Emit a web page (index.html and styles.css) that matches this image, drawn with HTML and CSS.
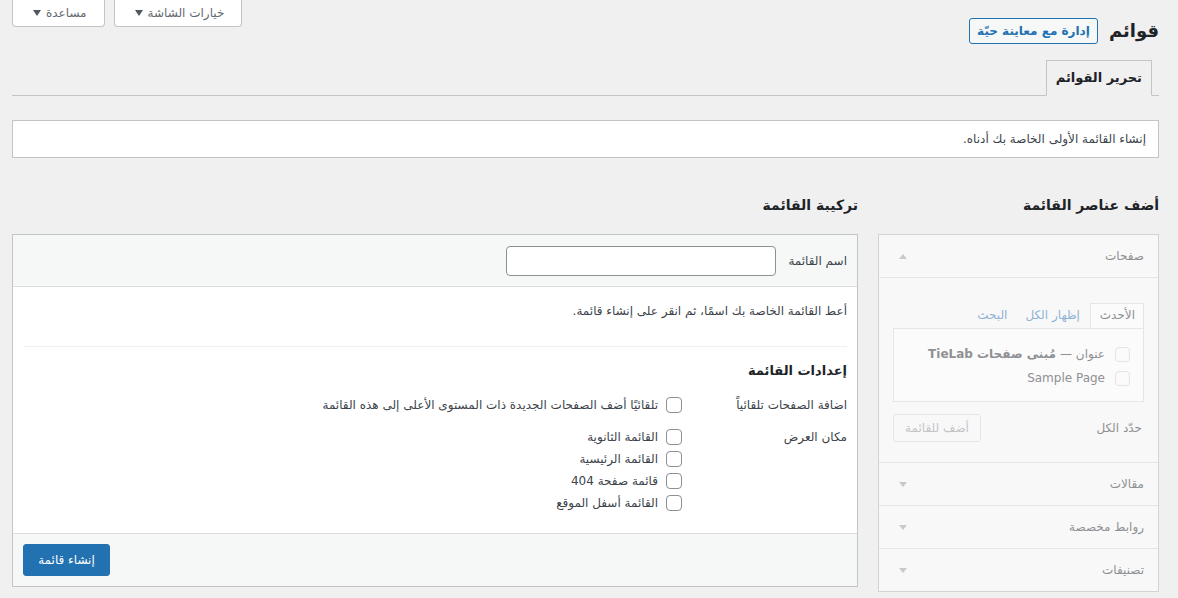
FILE: index.html
```html
<!DOCTYPE html>
<html lang="ar" dir="rtl">
<head>
  <meta charset="UTF-8">
  <meta name="viewport" content="width=device-width, initial-scale=1.0">
  <title>قوائم</title>
  <link rel="stylesheet" href="styles.css">
</head>
<body>
  <div class="wrap">
    <div class="page-head">
      <div class="title-group">
        <h1 class="page-title">قوائم</h1>
        <a class="title-action" href="#">إدارة مع معاينة حيّة</a>
      </div>
      <div class="meta-links">
        <button class="meta-btn">خيارات الشاشة <span class="caret"></span></button>
        <button class="meta-btn">مساعدة <span class="caret"></span></button>
      </div>
    </div>

    <div class="nav-tabs">
      <a class="nav-tab active" href="#">تحرير القوائم</a>
    </div>

    <div class="notice">إنشاء القائمة الأولى الخاصة بك أدناه.</div>

    <div class="columns">
      <!-- add menu items -->
      <div class="settings-col">
        <h2 class="col-title">أضف عناصر القائمة</h2>
        <div class="accordion">
          <div class="acc-section">
            <div class="acc-title open">صفحات <span class="acc-arrow up"></span></div>
            <div class="acc-content">
              <ul class="item-tabs">
                <li class="item-tab active">الأحدث</li>
                <li class="item-tab">إظهار الكل</li>
                <li class="item-tab">البحث</li>
              </ul>
              <div class="tabs-panel">
                <label class="item-row"><input type="checkbox" class="cb small" disabled> عنوان — <b>مُبنى صفحات TieLab</b></label>
                <label class="item-row"><input type="checkbox" class="cb small" disabled> Sample Page</label>
              </div>
              <div class="acc-actions">
                <span class="select-all">حدّد الكل</span>
                <button class="btn-secondary" disabled>أضف للقائمة</button>
              </div>
            </div>
          </div>
          <div class="acc-section">
            <div class="acc-title">مقالات <span class="acc-arrow"></span></div>
          </div>
          <div class="acc-section">
            <div class="acc-title">روابط مخصصة <span class="acc-arrow"></span></div>
          </div>
          <div class="acc-section">
            <div class="acc-title">تصنيفات <span class="acc-arrow"></span></div>
          </div>
        </div>
      </div>

      <!-- menu structure -->
      <div class="main-col">
        <h2 class="col-title">تركيبة القائمة</h2>
        <div class="menu-box">
          <div class="menu-header">
            <label class="name-label" for="menuName">اسم القائمة</label>
            <input class="name-input" id="menuName" type="text">
          </div>
          <div class="menu-body">
            <p class="hint">أعط القائمة الخاصة بك اسمًا، ثم انقر على إنشاء قائمة.</p>
            <div class="menu-settings">
              <h3 class="settings-title">إعدادات القائمة</h3>
              <div class="settings-row first">
                <div class="group-name">اضافة الصفحات تلقائياً</div>
                <div class="group-input">
                  <label class="opt"><input type="checkbox" class="cb"> تلقائيًا أضف الصفحات الجديدة ذات المستوى الأعلى إلى هذه القائمة</label>
                </div>
              </div>
              <div class="settings-row">
                <div class="group-name">مكان العرض</div>
                <div class="group-input">
                  <label class="opt"><input type="checkbox" class="cb"> القائمة الثانوية</label>
                  <label class="opt"><input type="checkbox" class="cb"> القائمة الرئيسية</label>
                  <label class="opt"><input type="checkbox" class="cb"> قائمة صفحة 404</label>
                  <label class="opt"><input type="checkbox" class="cb"> القائمة أسفل الموقع</label>
                </div>
              </div>
            </div>
          </div>
          <div class="menu-footer">
            <button class="btn-primary">إنشاء قائمة</button>
          </div>
        </div>
      </div>
    </div>
  </div>
</body>
</html>
```

FILE: styles.css
```css
:root {
  --page-bg: #f0f0f1;
  --border: #c3c4c7;
  --border-light: #dcdcde;
  --text: #3c434a;
  --heading: #1d2327;
  --muted: #646970;
  --blue: #2271b1;
}

* {
  box-sizing: border-box;
}

html,
body {
  margin: 0;
  padding: 0;
  background: var(--page-bg);
}

body {
  font-family: "DejaVu Sans", sans-serif;
  font-size: 12px;
  line-height: 1.4;
  color: var(--text);
}

.wrap {
  padding: 0 19px 0 12px;
}

/* Header */
.page-head {
  display: flex;
  align-items: flex-start;
}

.title-group {
  display: flex;
  align-items: center;
  gap: 11px;
  padding-top: 17px;
}

.page-title {
  margin: 0;
  font-size: 18px;
  font-weight: 600;
  line-height: 27px;
  color: var(--heading);
}

.title-action {
  display: inline-block;
  height: 26px;
  line-height: 24px;
  padding: 0 7px;
  border: 1px solid var(--blue);
  border-radius: 3px;
  background: #f6f7f7;
  color: var(--blue);
  font-size: 12px;
  font-weight: 600;
  text-decoration: none;
}

.meta-links {
  display: flex;
  gap: 9px;
  margin-right: auto;
}

.meta-btn {
  display: flex;
  align-items: center;
  gap: 5px;
  height: 27px;
  padding: 0 17px 0 20px;
  border: 1px solid var(--border);
  border-top: none;
  border-radius: 0 0 4px 4px;
  background: #fff;
  color: var(--muted);
  font-family: inherit;
  font-size: 12px;
  cursor: pointer;
}

.caret {
  width: 0;
  height: 0;
  border-left: 4px solid transparent;
  border-right: 4px solid transparent;
  border-top: 6px solid #50575e;
}

/* Tabs */
.nav-tabs {
  display: flex;
  margin-top: 16px;
  border-bottom: 1px solid var(--border);
}

.nav-tab {
  margin-right: 7px;
  margin-bottom: -1px;
  padding: 5px 9px;
  line-height: 24px;
  border: 1px solid var(--border);
  background: #dcdcde;
  color: var(--heading);
  font-size: 13px;
  font-weight: 600;
  text-decoration: none;
}

.nav-tab.active {
  background: var(--page-bg);
  border-bottom-color: var(--page-bg);
}

/* Notice */
.notice {
  margin-top: 24px;
  padding: 9px 12px;
  line-height: 18px;
  background: #fff;
  border: 1px solid var(--border);
}

/* Columns */
.columns {
  display: flex;
  gap: 20px;
  margin-top: 37px;
}

.settings-col {
  width: 281px;
  flex-shrink: 0;
}

.main-col {
  flex: 1;
}

.col-title {
  margin: 0 0 19px;
  font-size: 14px;
  font-weight: 600;
  line-height: 20px;
  color: var(--heading);
}

/* Accordion (disabled until a menu exists) */
.accordion {
  border: 1px solid #d2d3d5;
  background: #f8f8f9;
}

.acc-section + .acc-section {
  border-top: 1px solid #e6e6e7;
}

.acc-title {
  display: flex;
  justify-content: space-between;
  align-items: center;
  height: 42px;
  padding: 0 14px 0 20px;
  color: #8e9093;
  font-size: 12px;
}

.acc-title.open {
  border-bottom: 1px solid #e6e6e7;
  height: 43px;
}

.acc-arrow {
  width: 0;
  height: 0;
  border-left: 4px solid transparent;
  border-right: 4px solid transparent;
  border-top: 5px solid #c8c9cb;
}

.acc-arrow.up {
  border-top: none;
  border-bottom: 5px solid #c8c9cb;
}

.acc-content {
  padding: 25px 14px 20px;
  color: #8e9093;
}

.item-tabs {
  display: flex;
  margin: 0;
  padding: 0;
  list-style: none;
}

.item-tab {
  height: 25px;
  line-height: 23px;
  padding: 0 7px;
  margin-left: 2px;
  border: 1px solid transparent;
  color: #90b4d4;
}

.item-tab.active {
  border-color: #e6e6e7;
  border-bottom: none;
  color: #8e9093;
  background: #fbfbfb;
  padding: 0 8px 0 9px;
}

.tabs-panel {
  height: 74px;
  padding: 13px 13px 0;
  border: 1px solid #e6e6e7;
  background: #fbfbfb;
}

.item-row {
  display: flex;
  align-items: center;
  gap: 10px;
  height: 24px;
}

.item-row b {
  font-weight: 700;
  margin-right: -6px;
}

.acc-actions {
  display: flex;
  justify-content: space-between;
  align-items: center;
  margin-top: 12px;
  padding-right: 2px;
}

.btn-secondary {
  height: 28px;
  width: 88px;
  border: 1px solid #e6e6e7;
  border-radius: 3px;
  background: #f8f8f9;
  color: #c3c4c7;
  font-family: inherit;
  font-size: 12px;
}

/* Checkboxes */
.cb {
  appearance: none;
  -webkit-appearance: none;
  width: 16px;
  height: 16px;
  margin: 0;
  border: 1px solid #8c8f94;
  border-radius: 4px;
  background: #fff;
  flex-shrink: 0;
}

.cb.small {
  width: 15px;
  height: 15px;
  border-color: #e3e4e5;
  background: #fbfbfb;
}

/* Menu box */
.menu-box {
  border: 1px solid var(--border);
  background: #fff;
}

.menu-header {
  display: flex;
  align-items: center;
  gap: 12px;
  padding: 11px 10px 10px;
  background: #f6f7f7;
  border-bottom: 1px solid var(--border-light);
}

.name-input {
  width: 270px;
  height: 30px;
  border: 1px solid #8c8f94;
  border-radius: 4px;
  background: #fff;
  font-family: inherit;
}

.menu-body {
  padding: 0 10px 19px;
}

.hint {
  margin: 14px 0 0;
  line-height: 20px;
}

.menu-settings {
  margin-top: 25px;
  border-top: 1px solid var(--page-bg);
}

.settings-title {
  margin: 14px 0 0;
  font-size: 13px;
  font-weight: 600;
  line-height: 20px;
  color: var(--heading);
}

.settings-row {
  display: flex;
  margin-top: 11px;
}

.settings-row.first {
  margin-top: 14px;
}

.group-name {
  width: 165px;
  flex-shrink: 0;
  line-height: 20px;
}

.settings-row + .settings-row .group-name {
  line-height: 22px;
}

.group-input {
  display: flex;
  flex-direction: column;
}

.opt {
  display: flex;
  align-items: center;
  gap: 8px;
  height: 20px;
}

.settings-row + .settings-row .opt {
  height: 22px;
}

.menu-footer {
  display: flex;
  justify-content: flex-end;
  padding: 10px;
  background: #f6f7f7;
  border-top: 1px solid var(--border-light);
}

.btn-primary {
  height: 32px;
  width: 87px;
  border: 1px solid var(--blue);
  border-radius: 3px;
  background: var(--blue);
  color: #fff;
  font-family: inherit;
  font-size: 12px;
}
```
